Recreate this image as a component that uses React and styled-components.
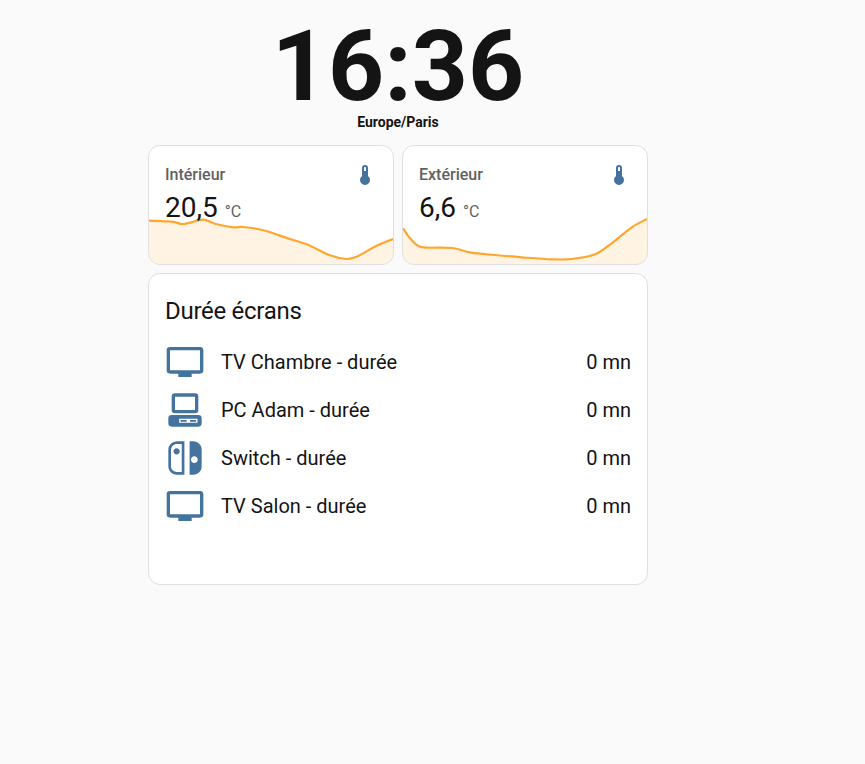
import React from "react";
import styled, { createGlobalStyle } from "styled-components";

const Global = createGlobalStyle`
  html, body { margin: 0; padding: 0; background: #fafafa; }
  body { font-family: Roboto, "Liberation Sans", sans-serif; color: #141414; }
`;

const Page = styled.div`
  width: 500px;
  margin-left: 148px;
  display: flex;
  flex-direction: column;
  gap: 8px;
`;
const Clock = styled.div`
  display: flex;
  flex-direction: column;
  align-items: center;
  height: 137px;
`;
const Time = styled.div`
  font-size: 98px;
  font-weight: 700;
  line-height: 92px;
  margin-top: 21px;
  color: #141414;
`;
const Zone = styled.div`
  font-size: 14px;
  font-weight: 700;
  line-height: 16px;
  margin-top: 1px;
`;
const Row = styled.div`
  display: grid;
  grid-template-columns: 1fr 1fr;
  gap: 8px;
`;
const Card = styled.div`
  position: relative;
  box-sizing: border-box;
  background: #fff;
  border: 1px solid #e0e0e0;
  border-radius: 12px;
  overflow: hidden;
`;
const SensorCard = styled(Card)`
  height: 120px;
  padding: 17px 16px 16px;
`;
const SensorHead = styled.div`
  display: flex;
  justify-content: space-between;
  align-items: center;
  height: 24px;
`;
const SensorName = styled.div`
  font-size: 16px;
  font-weight: 500;
  line-height: 24px;
  color: #616161;
`;
const Value = styled.div`
  position: relative;
  z-index: 1;
  display: flex;
  align-items: baseline;
  margin-top: 5px;
  font-size: 28px;
  line-height: 32px;
`;
const Unit = styled.span`
  font-size: 16px;
  color: #616161;
  margin-left: 7px;
`;
const Chart = styled.svg`
  position: absolute;
  left: 0;
  bottom: 0;
  width: 244px;
  height: 64px;
  display: block;
`;
const ListCard = styled(Card)`
  height: 312px;
  padding: 0 16px;
`;
const ListTitle = styled.div`
  font-size: 24px;
  letter-spacing: -0.012em;
  line-height: 32px;
  margin-top: 21px;
  margin-bottom: 11px;
`;
const Item = styled.div`
  display: flex;
  align-items: center;
  height: 48px;
  font-size: 20px;
`;
const ItemIcon = styled.svg`
  width: 40px;
  height: 40px;
  flex: none;
  fill: #44739e;
  margin-right: 16px;
`;
const ItemName = styled.span`
  flex: 1;
`;
const Thermo = styled.svg`
  width: 24px;
  height: 24px;
  fill: #44739e;
`;

const icons = {
  tv: "M21,17H3V5H21M21,3H3A2,2 0 0,0 1,5V17A2,2 0 0,0 3,19H8V21H16V19H21A2,2 0 0,0 23,17V5A2,2 0 0,0 21,3Z",
  pc: "M6,2H18A2,2 0 0,1 20,4V12A2,2 0 0,1 18,14H6A2,2 0 0,1 4,12V4A2,2 0 0,1 6,2M6,4V12H18V4H6M4,15H20A2,2 0 0,1 22,17V20A2,2 0 0,1 20,22H4A2,2 0 0,1 2,20V17A2,2 0 0,1 4,15M8.5,17.3V19.7H19.5V17.3H8.5M9.3,18H13V19H9.3V18M15,18H18.7V19H15V18Z",
  sw: "M10.04,20.4H7.12C6.19,20.4 5.3,20 4.64,19.36C4,18.7 3.6,17.81 3.6,16.88V7.12C3.6,6.19 4,5.3 4.64,4.64C5.3,4 6.19,3.62 7.12,3.62H10.04V20.4M7.12,2A5.12,5.12 0 0,0 2,7.12V16.88C2,19.71 4.29,22 7.12,22H11.65V2H7.12M5.11,8C5.11,9.04 5.95,9.88 7,9.88C8.03,9.88 8.87,9.04 8.87,8C8.87,6.96 8.03,6.12 7,6.12C5.95,6.12 5.11,6.96 5.11,8M17.61,11C18.72,11 19.62,11.89 19.62,13C19.62,14.12 18.72,15 17.61,15C16.5,15 15.58,14.12 15.58,13C15.58,11.89 16.5,11 17.61,11M14.76,22H17.04C19.78,22 22,19.78 22,17.04V6.96C22,4.22 19.78,2 17.04,2H14.76V22Z",
};
const thermo = "M15 13V5A3 3 0 0 0 9 5V13A5 5 0 1 0 15 13M12 4A1 1 0 0 1 13 5V8H11V5A1 1 0 0 1 12 4Z";

const smooth = (pts) => {
  let d = `M${pts[0][0]},${pts[0][1]}`;
  for (let i = 0; i < pts.length - 1; i++) {
    const p0 = pts[Math.max(i - 1, 0)];
    const p1 = pts[i];
    const p2 = pts[i + 1];
    const p3 = pts[Math.min(i + 2, pts.length - 1)];
    const c1 = [p1[0] + (p2[0] - p0[0]) / 6, p1[1] + (p2[1] - p0[1]) / 6];
    const c2 = [p2[0] - (p3[0] - p1[0]) / 6, p2[1] - (p3[1] - p1[1]) / 6];
    d += `C${c1[0].toFixed(1)},${c1[1].toFixed(1)} ${c2[0].toFixed(1)},${c2[1].toFixed(1)} ${p2[0]},${p2[1]}`;
  }
  return d;
};

const indoor = [[0,20.7],[22.7,21.7],[32.7,24],[41,22.7],[54.3,19.7],[66,23.7],[84.3,27.3],[94.3,27],[114.3,30.3],[141,39],[157.7,44.3],[181,55.3],[197.7,59],[207.7,56.7],[227.7,45.7],[244,39]];
const outdoor = [[0,28.3],[7,38.3],[15.3,46],[25.3,47.7],[48.7,48],[68.7,52.7],[92,55],[118.7,57.3],[148.7,59.3],[168.7,59],[192,54.3],[208.7,43.3],[228.7,27.3],[244,19]];

const Spark = ({ pts }) => {
  const line = smooth(pts);
  return (
    <Chart viewBox="0 0 244 64">
      <path d={`${line}L244,64L0,64Z`} fill="#ffa726" fillOpacity="0.13" />
      <path d={line} fill="none" stroke="#ffa630" strokeWidth="2.2" />
    </Chart>
  );
};

const Sensor = ({ name, value, pts }) => (
  <SensorCard>
    <SensorHead>
      <SensorName>{name}</SensorName>
      <Thermo viewBox="0 0 24 24"><path d={thermo} /></Thermo>
    </SensorHead>
    <Value>{value}<Unit>°C</Unit></Value>
    <Spark pts={pts} />
  </SensorCard>
);

const items = [
  ["tv", "TV Chambre - durée"],
  ["pc", "PC Adam - durée"],
  ["sw", "Switch - durée"],
  ["tv", "TV Salon - durée"],
];

export default function App() {
  return (
    <>
      <Global />
      <Page>
        <Clock>
          <Time>16:36</Time>
          <Zone>Europe/Paris</Zone>
        </Clock>
        <Row>
          <Sensor name="Intérieur" value="20,5" pts={indoor} />
          <Sensor name="Extérieur" value="6,6" pts={outdoor} />
        </Row>
        <ListCard>
          <ListTitle>Durée écrans</ListTitle>
          {items.map(([icon, name]) => (
            <Item key={name}>
              <ItemIcon viewBox="0 0 24 24"><path d={icons[icon]} /></ItemIcon>
              <ItemName>{name}</ItemName>
              <span>0 mn</span>
            </Item>
          ))}
        </ListCard>
      </Page>
    </>
  );
}
